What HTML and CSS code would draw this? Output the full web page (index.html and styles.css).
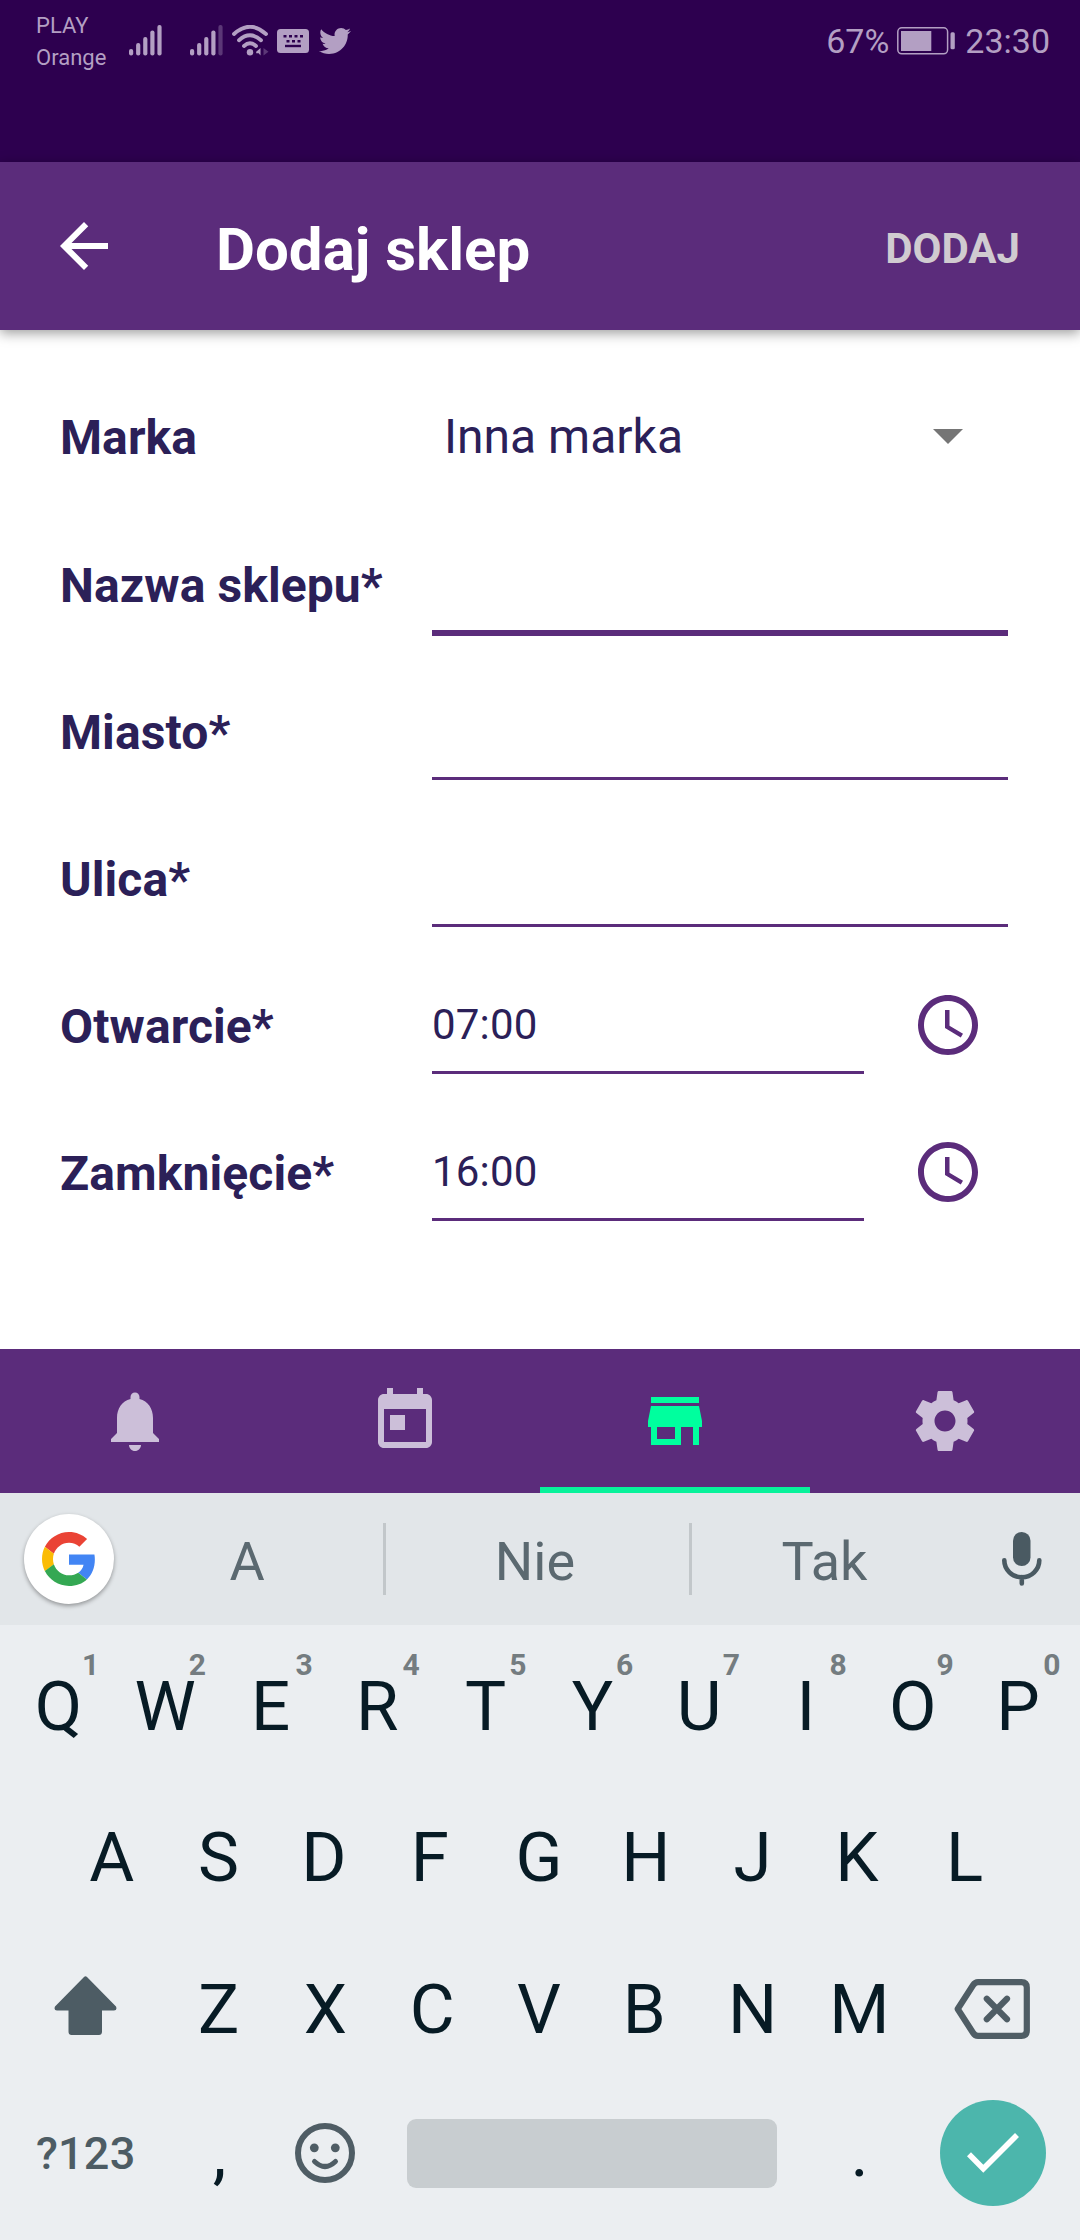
FILE: index.html
```html
<!DOCTYPE html>
<html lang="pl">
<head>
<meta charset="utf-8">
<title>Dodaj sklep</title>
<link rel="stylesheet" href="styles.css">
</head>
<body>
<div class="screen">
  <header class="status">
    <div class="carriers"><span>PLAY</span><span>Orange</span></div>
    <svg class="signal" width="33" height="31" viewBox="0 0 33 31" fill="currentColor"><rect y="24" width="4.2" height="6.5" rx="2"/><rect x="7.1" y="18" width="4.2" height="12.5" rx="2"/><rect x="14.2" y="12" width="4.2" height="18.5" rx="2"/><rect x="21.3" y="5.5" width="4.2" height="25" rx="2"/><rect x="28.4" width="4.2" height="30.5" rx="2"/></svg>
    <svg class="signal2" width="33" height="31" viewBox="0 0 33 31" fill="currentColor"><rect y="24" width="4.2" height="6.5" rx="2"/><rect x="7.1" y="18" width="4.2" height="12.5" rx="2"/><rect x="14.2" y="12" width="4.2" height="18.5" rx="2"/><rect x="21.3" y="5.5" width="4.2" height="25" rx="2"/><rect x="28.4" width="4.2" height="30.5" rx="2" opacity=".35"/></svg>
    <svg class="wifi" width="37" height="31" viewBox="0 0 37 31" fill="none" stroke="currentColor" stroke-width="3.8" stroke-linecap="round"><path d="M2 9Q18-5.500 34 9M7 15.200Q18 5.500 29 15.200M12 21Q18 15.500 24 21"/><circle cx="18" cy="27.300" r="3.200" fill="currentColor" stroke="none"/><path d="M28.500 23v7.500l-1.800-2.200h-2.500v-1.500z" fill="currentColor" stroke="none"/><path d="M31.500 23v7.500l5-3.700z" fill="currentColor" stroke="none" opacity=".35"/></svg>
    <svg class="ime" width="32" height="24" viewBox="0 0 32 24"><rect width="32" height="24" rx="3.500" fill="currentColor"/><path d="M6.500 7.200h20M9.500 12.200h14" stroke="#2d004f" stroke-width="2.600" stroke-dasharray="3 2.500"/><path d="M8 17h16" stroke="#2d004f" stroke-width="2.400"/></svg>
    <svg class="bird" width="32" height="32" viewBox="0 0 24 24" fill="currentColor"><path d="M23.954 4.569c-.885.389-1.830.654-2.825.775 1.014-.611 1.794-1.574 2.163-2.723-.951.555-2.005.959-3.127 1.184-.896-.959-2.173-1.559-3.591-1.559-2.717 0-4.920 2.203-4.920 4.917 0 .390.045.765.127 1.124C7.691 8.094 4.066 6.130 1.640 3.161c-.427.722-.666 1.561-.666 2.475 0 1.710.870 3.213 2.188 4.096-.807-.026-1.566-.248-2.228-.616v.061c0 2.385 1.693 4.374 3.946 4.827-.413.111-.849.171-1.296.171-.314 0-.615-.030-.916-.086.631 1.953 2.445 3.377 4.604 3.417-1.680 1.319-3.809 2.105-6.102 2.105-.390 0-.779-.023-1.170-.067 2.189 1.394 4.768 2.209 7.557 2.209 9.054 0 13.999-7.496 13.999-13.986 0-.209 0-.420-.015-.630.961-.689 1.800-1.560 2.460-2.548z"/></svg>
    <span class="percent">67%</span>
    <svg class="battery" width="59" height="28" viewBox="0 0 59 28"><rect x=".8" y=".8" width="49.800" height="26" rx="4" fill="none" stroke="currentColor" stroke-width="1.500"/><rect x="4" y="4" width="30.300" height="20" fill="currentColor"/><rect x="53.500" y="5.300" width="4.300" height="17" rx="1.500" fill="currentColor"/></svg>
    <span class="clock">23:30</span>
  </header>

  <div class="appbar">
    <svg width="72" height="72" viewBox="0 0 24 24" fill="#fff"><path d="M20 11H7.830l5.590-5.590L12 4l-8 8 8 8 1.410-1.410L7.830 13H20v-2z"/></svg>
    <h1>Dodaj sklep</h1>
    <span class="action">DODAJ</span>
  </div>

  <main class="form">
    <div class="row first"><span class="label">Marka</span><div class="select"><span>Inna marka</span><svg width="30" height="15" viewBox="0 0 30 15"><path d="M0 0h30L15 15z" fill="#757575"/></svg></div></div>
    <div class="row"><span class="label">Nazwa sklepu*</span><div class="field focused"></div></div>
    <div class="row"><span class="label">Miasto*</span><div class="field"></div></div>
    <div class="row"><span class="label">Ulica*</span><div class="field"></div></div>
    <div class="row"><span class="label">Otwarcie*</span><div class="field time">07:00</div><svg class="picker" viewBox="0 0 24 24"><path d="M11.990 2C6.470 2 2 6.480 2 12s4.470 10 9.990 10C17.520 22 22 17.520 22 12S17.520 2 11.990 2zM12 20c-4.420 0-8-3.580-8-8s3.580-8 8-8 8 3.580 8 8-3.580 8-8 8zM12.500 7H11v6l5.250 3.150.750-1.230-4.500-2.670z"/></svg></div>
    <div class="row"><span class="label">Zamknięcie*</span><div class="field time">16:00</div><svg class="picker" viewBox="0 0 24 24"><path d="M11.990 2C6.470 2 2 6.480 2 12s4.470 10 9.990 10C17.520 22 22 17.520 22 12S17.520 2 11.990 2zM12 20c-4.420 0-8-3.580-8-8s3.580-8 8-8 8 3.580 8 8-3.580 8-8 8zM12.500 7H11v6l5.250 3.150.750-1.230-4.500-2.670z"/></svg></div>
  </main>

  <nav class="tabs">
    <div class="tab"><svg viewBox="0 0 24 24"><path d="M12 22c1.100 0 2-.9 2-2h-4c0 1.100.890 2 2 2zm6-6v-5c0-3.070-1.640-5.640-4.500-6.320V4c0-.830-.670-1.500-1.500-1.500s-1.500.670-1.500 1.500v.680C7.630 5.360 6 7.920 6 11v5l-2 2v1h16v-1l-2-2z"/></svg></div>
    <div class="tab"><svg viewBox="0 0 24 24"><path d="M19 3h-1V1h-2v2H8V1H6v2H5c-1.110 0-1.990.9-1.990 2L3 19c0 1.100.890 2 2 2h14c1.100 0 2-.9 2-2V5c0-1.100-.9-2-2-2zm0 16H5V8h14v11zM7 10h5v5H7z"/></svg></div>
    <div class="tab active"><svg viewBox="0 0 24 24"><path d="M20 4H4v2h16V4zm1 10v-2l-1-5H4l-1 5v2h1v6h10v-6h4v6h2v-6h1zm-9 4H6v-4h6v4z"/></svg></div>
    <div class="tab"><svg viewBox="0 0 24 24"><path d="M19.430 12.980c.040-.320.070-.640.070-.980s-.030-.660-.070-.980l2.110-1.650c.190-.150.240-.420.120-.640l-2-3.460c-.120-.220-.390-.300-.610-.220l-2.490 1c-.520-.4-1.080-.730-1.690-.980l-.380-2.650C14.460 2.180 14.250 2 14 2h-4c-.250 0-.460.180-.490.420l-.380 2.650c-.610.250-1.170.590-1.690.980l-2.490-1c-.230-.090-.490 0-.610.220l-2 3.460c-.130.220-.070.490.120.640l2.110 1.650c-.040.320-.070.650-.070.980s.030.660.070.980l-2.110 1.650c-.190.150-.240.420-.120.640l2 3.460c.120.220.390.300.610.220l2.490-1c.520.4 1.080.730 1.690.980l.380 2.650c.030.240.240.420.490.420h4c.250 0 .460-.180.490-.420l.380-2.650c.610-.250 1.170-.590 1.690-.980l2.490 1c.230.090.490 0 .610-.220l2-3.460c.120-.220.070-.490-.120-.640l-2.110-1.650zM12 15.500c-1.930 0-3.500-1.570-3.500-3.500s1.570-3.500 3.500-3.500 3.500 1.570 3.500 3.500-1.570 3.500-3.500 3.500z"/></svg></div>
  </nav>

  <section class="suggestions">
    <div class="google"><svg width="54" height="54" viewBox="0 0 48 48"><path fill="#EA4335" d="M24 9.500c3.540 0 6.710 1.220 9.210 3.600l6.850-6.850C35.900 2.380 30.470 0 24 0 14.620 0 6.510 5.380 2.560 13.220l7.980 6.190C12.430 13.720 17.740 9.500 24 9.500z"/><path fill="#4285F4" d="M46.980 24.550c0-1.570-.150-3.090-.380-4.550H24v9.020h12.940c-.580 2.960-2.260 5.480-4.780 7.180l7.730 6c4.510-4.180 7.090-10.360 7.090-17.650z"/><path fill="#FBBC05" d="M10.530 28.590c-.480-1.450-.760-2.990-.760-4.590s.270-3.140.760-4.590l-7.980-6.190C.920 16.460 0 20.120 0 24c0 3.880.920 7.540 2.560 10.780l7.970-6.190z"/><path fill="#34A853" d="M24 48c6.480 0 11.930-2.130 15.890-5.810l-7.730-6c-2.150 1.450-4.920 2.300-8.160 2.300-6.260 0-11.570-4.220-13.470-9.910l-7.980 6.190C6.510 42.620 14.620 48 24 48z"/></svg></div>
    <span class="word left">A</span>
    <span class="word">Nie</span>
    <span class="word right">Tak</span>
    <svg class="mic" width="40" height="54" viewBox="0 0 40 54"><rect x="11" width="17.500" height="34" rx="8.700" fill="#4a5a62"/><path d="M2.300 28.300a17.500 17 0 0 0 35 0M19.800 45v6.500" fill="none" stroke="#4a5a62" stroke-width="4.600" stroke-linecap="round"/></svg>
  </section>

  <section class="keyboard">
    <div class="keys">
      <span>Q<sup>1</sup></span><span>W<sup>2</sup></span><span class="stem">E<sup>3</sup></span><span class="stem">R<sup>4</sup></span><span>T<sup>5</sup></span><span>Y<sup>6</sup></span><span>U<sup>7</sup></span><span>I<sup>8</sup></span><span>O<sup>9</sup></span><span class="stem">P<sup>0</sup></span>
    </div>
    <div class="keys middle">
      <span>A</span><span>S</span><span class="stem">D</span><span class="stem wider">F</span><span>G</span><span>H</span><span>J</span><span class="stem wider">K</span><span class="stem">L</span>
    </div>
    <div class="keys lower">
      <div class="wide shift"><svg width="63" height="59" viewBox="0 0 63 59"><path d="M30 1Q31.500-.5 33 1L62 30.500Q63.500 34.500 60 34.500H48V55.500Q48 59 45 59H17.500Q14.500 59 14.500 55.500V34.500H3Q-.5 34.500 1 30.500z" fill="#4d5c64"/></svg></div>
      <span>Z</span><span>X</span><span>C</span><span>V</span><span class="stem">B</span><span>N</span><span>M</span>
      <div class="wide delete"><svg width="76" height="60" viewBox="0 0 76 60" fill="none" stroke="#4f5d65" stroke-width="6.200"><path d="M3.700 30L19 6.200Q21 3.100 24 3.100H67.500Q72.800 3.100 72.800 8.500V51.500Q72.800 56.900 67.500 56.900H24Q21 56.900 19 53.800z" stroke-linejoin="round"/><path d="M32.800 19.800L53 40.200M53 19.800L32.800 40.200" stroke-linecap="round"/></svg></div>
    </div>
    <div class="bottom">
      <span class="symbols">?123</span>
      <span class="punct">,</span>
      <svg class="emoji" width="60" height="60" viewBox="0 0 60 60" fill="none" stroke="#4f5d65"><circle cx="30" cy="30" r="27" stroke-width="6"/><circle cx="19.300" cy="24.800" r="4.400" fill="#4f5d65" stroke="none"/><circle cx="40.300" cy="24.800" r="4.400" fill="#4f5d65" stroke="none"/><path d="M19.500 38.500Q30 48.500 40.500 38.500" stroke-width="5" stroke-linecap="round"/></svg>
      <div class="space"></div>
      <span class="punct">.</span>
      <div class="enter"><svg width="52" height="41" viewBox="0 0 52 41"><path d="M2 21.300L16.300 35.800L50 2" fill="none" stroke="#fff" stroke-width="5.600"/></svg></div>
    </div>
  </section>
</div>
</body>
</html>
```
FILE: styles.css
```css
* { box-sizing: border-box; }

body {
  margin: 0;
  background: #fff;
  font-family: Roboto, "Noto Sans", sans-serif;
}

svg { display: block; flex: none; }

.screen {
  width: 1080px;
  height: 2240px;
  display: flex;
  flex-direction: column;
  overflow: hidden;
}

/* Status bar */
.status {
  height: 162px;
  padding: 9px 30px 0 36px;
  display: flex;
  align-items: flex-start;
  background: #2d004f;
  color: #b39fc3;
}

.carriers {
  width: 93px;
  padding-top: 1px;
  display: flex;
  flex-direction: column;
  font-size: 22px;
  line-height: 32px;
}

.signal { margin-top: 15.500px; }
.signal2 { margin: 15.500px 0 0 28px; }
.wifi { margin: 15.500px 0 0 9px; }
.ime { margin: 20px 0 0 8px; }
.bird { margin: 16px auto 0 10px; }

.percent, .clock {
  font-size: 34px;
  line-height: 40px;
  margin-top: 12px;
}

.battery { margin: 18px 9px 0 8px; }

/* App bar */
.appbar {
  position: relative;
  height: 168px;
  flex: none;
  padding: 0 60px 0 48px;
  display: flex;
  align-items: center;
  background: #5b2c7b;
  box-shadow: 0 3px 12px rgba(0, 0, 0, .4);
}

.appbar h1 {
  margin: 7px auto 0 96px;
  font-size: 60px;
  line-height: 70px;
  font-weight: 700;
  color: #fff;
}

.action {
  margin-top: 5px;
  font-size: 42px;
  line-height: 50px;
  font-weight: 700;
  color: #d0cbd0;
}

/* Form */
.form {
  height: 1019px;
  flex: none;
  padding: 34px 72px 0 60px;
  color: #2b2058;
}

.row {
  height: 147px;
  display: flex;
  align-items: center;
}

.row.first { height: 148px; }

.label {
  width: 372px;
  font-size: 48px;
  line-height: 60px;
  font-weight: 700;
  letter-spacing: .1px;
  white-space: nowrap;
}

.select {
  flex: 1;
  display: flex;
  justify-content: space-between;
  align-items: center;
  padding: 0 45px 3px 12px;
  font-size: 48px;
}

.field {
  flex: 1;
  align-self: flex-end;
  height: 96px;
  margin-bottom: 26px;
  border-bottom: 3px solid #5b2c7b;
  font-size: 42px;
  line-height: 93px;
  letter-spacing: .2px;
}

.field.focused {
  margin-bottom: 23px;
  border-bottom-width: 6px;
}

.field.time { flex: none; width: 432px; }

.picker {
  width: 72px;
  height: 72px;
  margin: 0 0 3px 48px;
  fill: #5b2c7b;
}

/* Tabs */
.tabs {
  height: 144px;
  flex: none;
  display: grid;
  grid-template-columns: repeat(4, 1fr);
  background: #5b2c7b;
}

.tab {
  display: flex;
  justify-content: center;
  padding-top: 36px;
  fill: #ccbfd9;
}

.tab svg { width: 72px; height: 72px; }

.tab.active {
  fill: #00ff9e;
  border-bottom: 6px solid #08f29b;
}

/* Suggestion strip */
.suggestions {
  height: 132px;
  flex: none;
  display: flex;
  align-items: center;
  padding-left: 24px;
  background: #e2e6e9;
}

.google {
  width: 90px;
  height: 90px;
  display: flex;
  align-items: center;
  justify-content: center;
  border-radius: 50%;
  background: #fff;
  box-shadow: 0 2px 4px rgba(0, 0, 0, .35);
}

.word {
  width: 306px;
  height: 72px;
  padding-right: 5px;
  border-right: 3px solid #c2c7ca;
  text-align: center;
  font-size: 54px;
  line-height: 78px;
  color: #5b6970;
}

.word.left { width: 272px; padding-right: 3px; }
.word.right { width: 270px; border-right: 0; }
.mic { margin-left: 40px; }

/* Keyboard */
.keyboard {
  flex: 1;
  background: #ebeef1;
  color: #071b25;
}

.keys {
  height: 152px;
  padding: 6px 7px 0 5px;
  display: flex;
  justify-content: center;
  font-size: 69px;
  line-height: 152px;
}

.keys span {
  position: relative;
  width: 106.800px;
  text-align: center;
}

/* Letters with a left stem are centred on their ink, not on their advance */
.keys .stem { padding-right: 3px; }
.keys .wider { padding-right: 5px; }

.keys:first-child { height: 151px; }

.keys sup {
  position: absolute;
  left: 77px;
  top: 19px;
  font-size: 30px;
  line-height: 30px;
  font-weight: 700;
  color: #747c80;
}

.wide { width: 160.200px; display: flex; }
.shift { padding: 42px 0 0 49px; }
.delete { padding: 45px 0 0 41px; }

.bottom {
  height: 106px;
  margin-top: 20px;
  padding: 0 34px 0 35px;
  display: flex;
  align-items: center;
}

.symbols {
  width: 131px;
  padding-left: 1px;
  font-size: 45px;
  font-weight: 500;
  letter-spacing: .2px;
  color: #4d5c64;
}

.punct {
  width: 107px;
  text-align: center;
  font-size: 69px;
  line-height: 80px;
}

.emoji { margin-left: 22px; }

.space {
  width: 370px;
  height: 69px;
  margin: 0 29px 0 52px;
  border-radius: 9px;
  background: #c8cdd0;
}

.enter {
  width: 106px;
  height: 106px;
  margin-left: auto;
  display: flex;
  align-items: center;
  justify-content: center;
  border-radius: 50%;
  background: #4cb6ac;
}
```
